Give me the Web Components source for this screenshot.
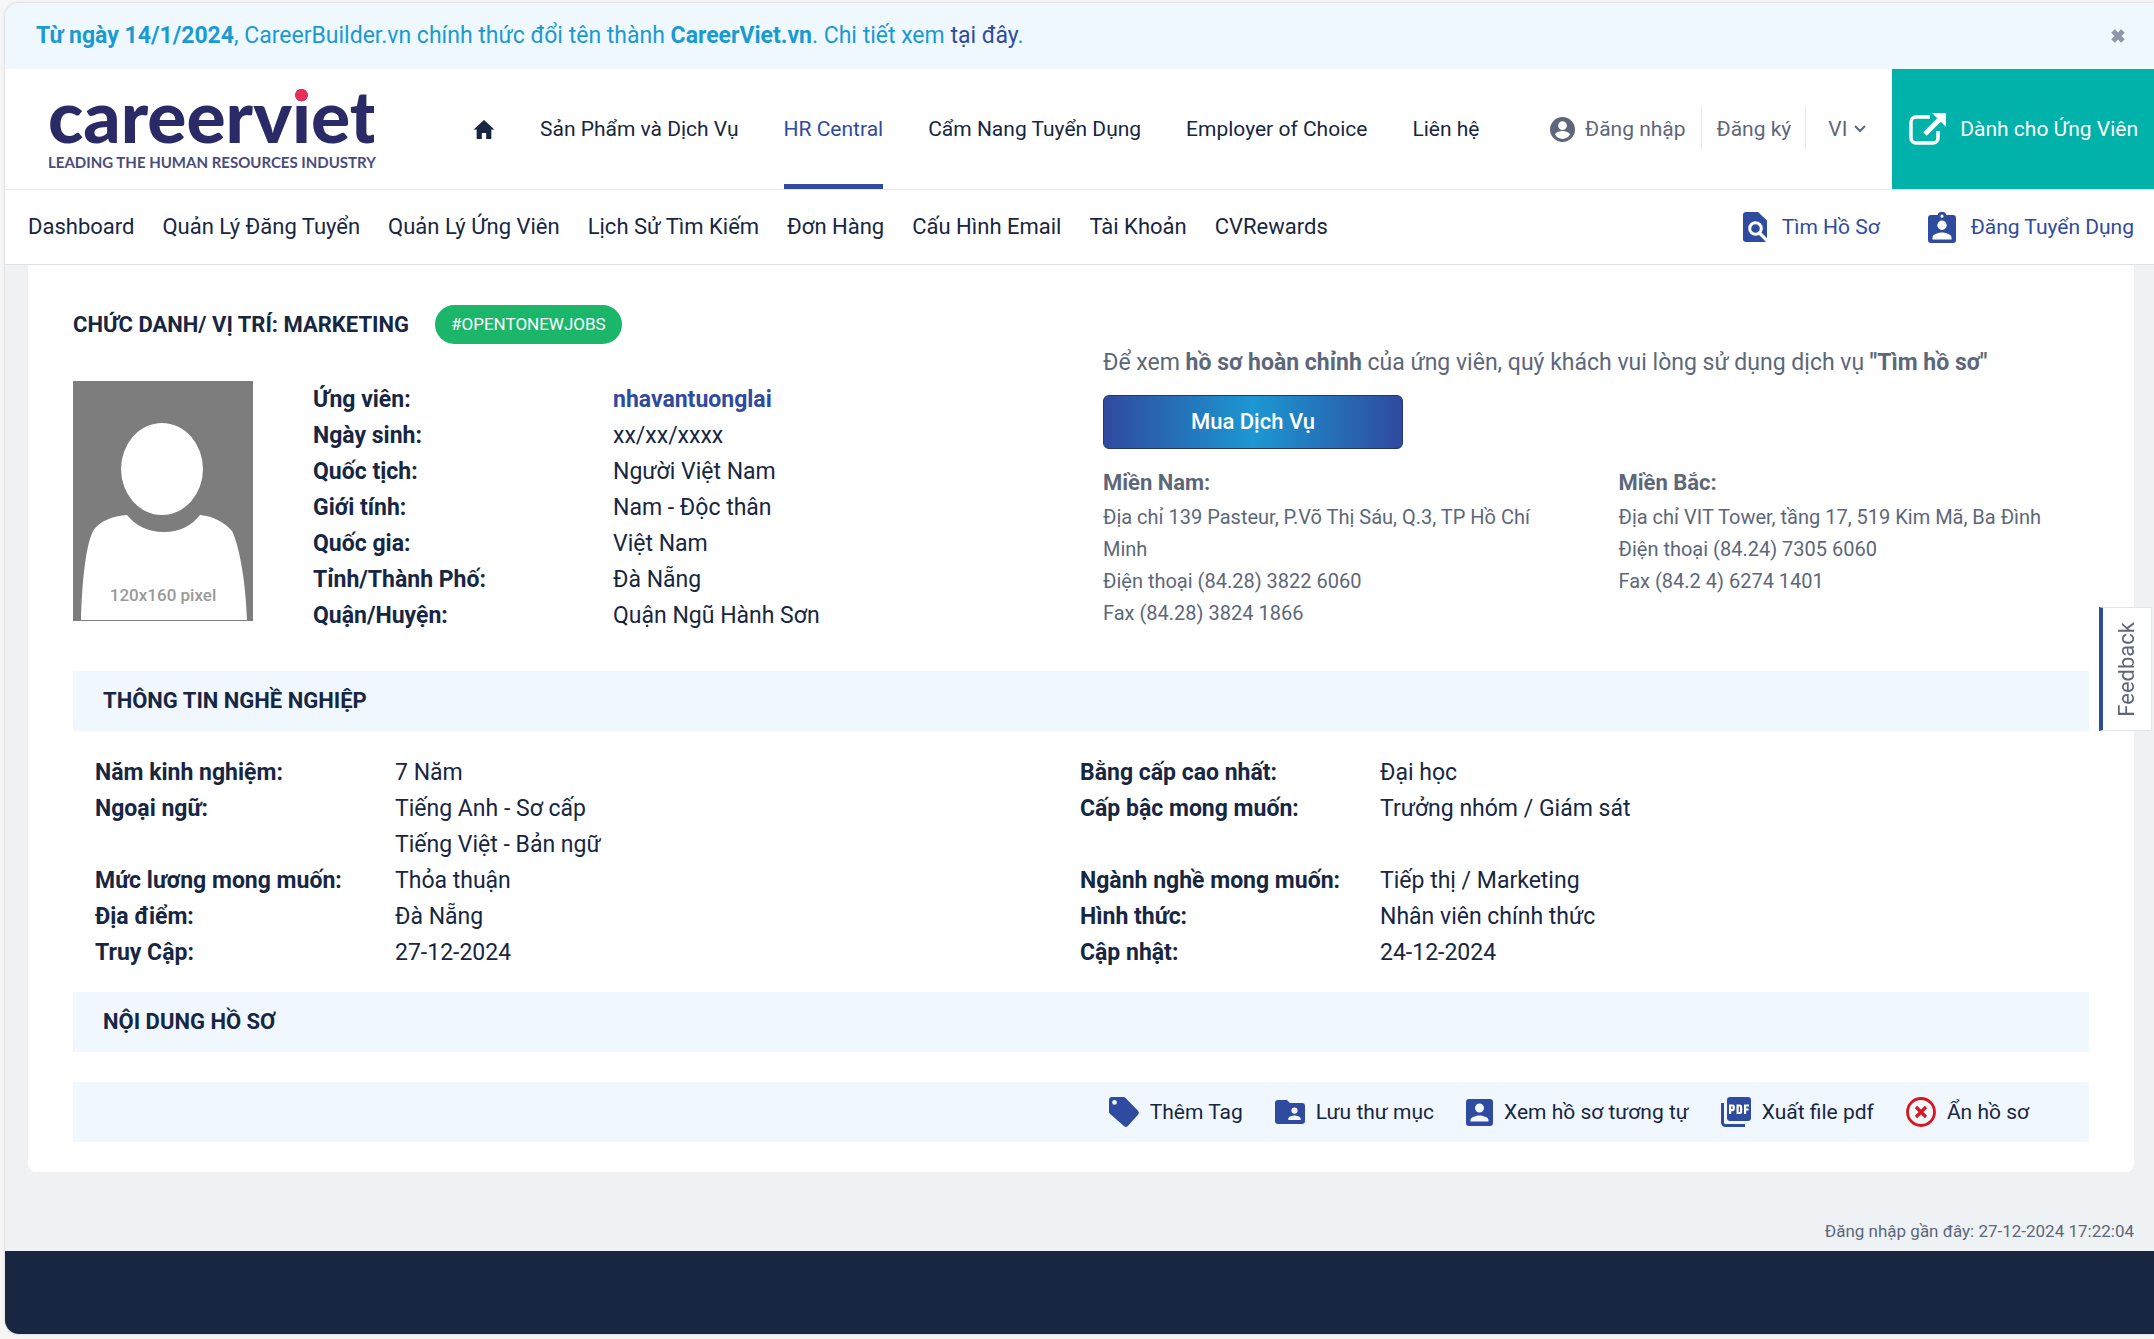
<!DOCTYPE html>
<html lang="vi">
<head>
<meta charset="utf-8">
<title>CareerViet - Hồ sơ ứng viên</title>
<style>
:root{--ink:#172642;--blue:#2f4ba0;--grey:#5d677a;--sky:#1b9ad2;--pale:#f0f7fe}
body{margin:0;padding:3px 0 5px 5px;background:#f6f6f7;font-family:Roboto,"Noto Sans",sans-serif;color:var(--ink);font-size:21px;line-height:30px}
</style>
</head>
<body>
<cv-app></cv-app>
<script>
const ICONS={
home:['0 0 24 22','<path fill="currentColor" d="M12 0 0 11h3.500v11h6v-7h5v7h6V11H24z"/>'],
user:['0 0 24 24','<path fill="currentColor" fill-rule="evenodd" d="M12 0a12 12 0 1 0 0 24 12 12 0 0 0 0-24zm0 4a4.200 4.200 0 1 1 0 8.400A4.200 4.200 0 0 1 12 4zm0 17a8.600 8.600 0 0 1-7.200-3.900c0-2.400 4.800-3.700 7.200-3.700s7.200 1.300 7.200 3.700A8.600 8.600 0 0 1 12 21z"/>'],
chev:['0 0 12 8','<path fill="none" stroke="currentColor" stroke-width="2" d="m1 1 5 5 5-5"/>'],
close:['0 0 14 14','<path fill="none" stroke="currentColor" stroke-width="5" d="m2 2 10 10M12 2 2 12"/>'],
ext:['0 0 37 32','<path fill="none" stroke="currentColor" stroke-width="3.500" d="M21 4H7a5 5 0 0 0-5 5v16a5 5 0 0 0 5 5h17a5 5 0 0 0 5-5v-7"/><path stroke="currentColor" stroke-width="5" d="M16 21 31 6"/><path fill="currentColor" d="M23 0h14v14z"/>'],
search:['0 0 24 30','<path fill="currentColor" d="M3 0h12l9 8.500v21L21 30H3a3 3 0 0 1-3-3V3a3 3 0 0 1 3-3z"/><circle cx="12.500" cy="16.500" r="5.800" fill="none" stroke="#fff" stroke-width="3"/><path stroke="#fff" stroke-width="3.200" d="m16 20.500 8.500 8.500"/>'],
badge:['0 0 28 31','<path fill="currentColor" fill-rule="evenodd" d="M3 3h6.600a4.600 4.600 0 0 1 8.800 0H25a3 3 0 0 1 3 3v22a3 3 0 0 1-3 3H3a3 3 0 0 1-3-3V6a3 3 0 0 1 3-3zm11-.4a1.500 1.500 0 1 0 0 3.100 1.500 1.500 0 0 0 0-3.100zM14 8.500a4.700 4.700 0 1 0 0 9.400 4.700 4.700 0 0 0 0-9.400zM4.500 27.500h19v-2c0-3.200-6.300-5-9.500-5s-9.500 1.800-9.500 5z"/>'],
tag:['0 0 30 30','<path fill="currentColor" fill-rule="evenodd" d="M3 0h11.500q1.200 0 2.100.9L29.200 14q1.600 1.800 0 3.500L18.600 29.200q-1.700 1.600-3.400 0L.9 16.700Q0 15.800 0 14.500V3a3 3 0 0 1 3-3zm2.500 3a2.400 2.400 0 1 0 0 4.800 2.400 2.400 0 0 0 0-4.800z"/>'],
folder:['0 0 30 24','<path fill="currentColor" fill-rule="evenodd" d="M3 0h9l3 3h12a3 3 0 0 1 3 3v15a3 3 0 0 1-3 3H3a3 3 0 0 1-3-3V3a3 3 0 0 1 3-3zm16.500 7.500a3 3 0 1 0 0 6.200 3 3 0 0 0 0-6.200zM13.300 20h12.400v-1.300c0-2.100-4.100-3.200-6.200-3.200s-6.200 1.100-6.200 3.200z"/>'],
person:['0 0 27 27','<path fill="currentColor" fill-rule="evenodd" d="M3 0h21a3 3 0 0 1 3 3v21a3 3 0 0 1-3 3H3a3 3 0 0 1-3-3V3a3 3 0 0 1 3-3zm10.500 4.500a4.500 4.500 0 1 0 0 9 4.500 4.500 0 0 0 0-9zM4.500 22.500h18V21c0-3-6-4.600-9-4.600S4.500 18 4.500 21z"/>'],
pdf:['0 0 30 30','<path fill="currentColor" d="M9 0h18a3 3 0 0 1 3 3v18a3 3 0 0 1-3 3H9a3 3 0 0 1-3-3V3a3 3 0 0 1 3-3z"/><path fill="none" stroke="currentColor" stroke-width="3" d="M1.500 6v19.500a3 3 0 0 0 3 3H24"/><path fill="none" stroke="#fff" stroke-width="2.200" d="M9.100 17V8.500h2.600a1 1 0 0 1 1 1v2.600a1 1 0 0 1-1 1H9.100M16.600 8.500h2a1.500 1.500 0 0 1 1.500 1.500v4.500a1.500 1.500 0 0 1-1.500 1.500h-2zM24.100 17V8.500H28M24.100 12.500h3.400"/>'],
hide:['0 0 30 30','<circle cx="15" cy="15" r="13.500" fill="none" stroke="#d8161e" stroke-width="2.800"/><path stroke="#d8161e" stroke-width="3.200" d="m10 10 10 10M20 10 10 20"/>']
};
const def=(name,css,html)=>customElements.define(name,class extends HTMLElement{
  constructor(){super();this.attachShadow({mode:'open'});}
  connectedCallback(){
    this.shadowRoot.innerHTML='<style>*{box-sizing:border-box}:host{display:block}a{color:inherit;text-decoration:none}'+css+'</style>'+(typeof html==='function'?html(this):html);
  }
});
def('cv-icon',':host{display:inline-flex;flex:none}svg{display:block;overflow:visible}',e=>{
  const [vb,body]=ICONS[e.getAttribute('name')];
  return `<svg width="${e.getAttribute('w')}" height="${e.getAttribute('h')}" viewBox="${vb}" aria-hidden="true">${body}</svg>`;
});
def('cv-banner',`
:host{display:flex;align-items:center;justify-content:space-between;height:66px;padding:0 23px 0 31px;background:#eff8ff;color:var(--sky);font-size:23px}
p{margin:0}
button{border:0;background:none;padding:6px;color:#8f96a8;display:flex}`,
`<p><slot></slot></p><button aria-label="Đóng"><cv-icon name="close" w="14" h="14"></cv-icon></button>`);
/* The red area lies only behind the dot of the "i"; the rest of the word is navy. */
def('cv-logo',`
a{display:block;width:326px;padding-bottom:8px;font-family:Lato,sans-serif}
b{display:block;font-size:73px;line-height:72px;font-weight:900;color:transparent;background:linear-gradient(#ea2e5b,#ea2e5b) 238px 0/26px 24px no-repeat,linear-gradient(#292a66,#292a66);-webkit-background-clip:text;background-clip:text}
small{display:block;margin-top:2px;font-size:15px;line-height:18px;font-weight:700;color:#4a4b7c;white-space:nowrap}`,
`<a href="#"><b>careerviet</b><small>LEADING THE HUMAN RESOURCES INDUSTRY</small></a>`);
def('cv-header',`
:host{display:flex;height:121px;background:#fff;border-bottom:1px solid #e6e8ea;padding-left:43px}
cv-logo{align-self:center}
nav{display:flex;gap:45px;margin-left:99px}
nav a{display:flex;align-items:center;height:120px;white-space:nowrap;border:solid transparent;border-width:5px 0}
nav a.on{color:var(--blue);border-bottom-color:var(--blue)}
.user{display:flex;align-items:center;margin-left:auto;color:var(--grey)}
.user>*{display:flex;align-items:center;height:42px;white-space:nowrap}
.user .in{gap:10px;padding-right:15px}
.user .up{padding:0 14px 0 15px;border:solid #e4e7ec;border-width:0 1px}
.lang{padding:0 26px 0 22px;gap:6px}
select{appearance:none;border:0;background:none;font:inherit;color:inherit;padding:0;margin:0}
.seek{display:flex;align-items:center;gap:14px;background:#00b2a9;color:#fff;padding:0 16px 0 17px;white-space:nowrap}`,
`<cv-logo></cv-logo>
<nav><a href="#" aria-label="Trang chủ"><cv-icon name="home" w="22" h="19"></cv-icon></a><a href="#">Sản Phẩm và Dịch Vụ</a><a href="#" class="on">HR Central</a><a href="#">Cẩm Nang Tuyển Dụng</a><a href="#">Employer of Choice</a><a href="#">Liên hệ</a></nav>
<div class="user"><a class="in" href="#"><cv-icon name="user" w="25" h="25"></cv-icon>Đăng nhập</a><a class="up" href="#">Đăng ký</a><label class="lang"><select aria-label="Ngôn ngữ"><option>VI</option></select><cv-icon name="chev" w="12" h="8"></cv-icon></label></div>
<a class="seek" href="#"><cv-icon name="ext" w="37" h="32"></cv-icon>Dành cho Ứng Viên</a>`);
def('cv-subnav',`
:host{display:flex;align-items:center;justify-content:space-between;height:75px;background:#fff;border-bottom:1px solid #dfe2e5;padding:0 20px 0 23px}
nav{display:flex;gap:28px;white-space:nowrap;font-size:22px}
nav.r{gap:48px;color:var(--blue);font-size:21px}nav.r a{display:flex;align-items:center;gap:15px}`,
`<nav><a href="#">Dashboard</a><a href="#">Quản Lý Đăng Tuyển</a><a href="#">Quản Lý Ứng Viên</a><a href="#">Lịch Sử Tìm Kiếm</a><a href="#">Đơn Hàng</a><a href="#">Cấu Hình Email</a><a href="#">Tài Khoản</a><a href="#">CVRewards</a></nav>
<nav class="r"><a href="#"><cv-icon name="search" w="24" h="30"></cv-icon>Tìm Hồ Sơ</a><a href="#"><cv-icon name="badge" w="28" h="31"></cv-icon>Đăng Tuyển Dụng</a></nav>`);
def('cv-field',`
:host{display:grid;grid-template-columns:300px 1fr;font-size:23px;line-height:36px}
b{font-weight:700}`,
e=>`<b>${e.getAttribute('label')}</b><span><slot></slot></span>`);
def('cv-bar',`
:host{display:flex;align-items:center;height:60px;background:var(--pale);padding:0 30px}
h2{margin:0;font-size:22px;line-height:30px;font-weight:700}`,`<h2><slot></slot></h2>`);
def('cv-avatar',`svg{display:block}text{font:500 17px Roboto,sans-serif;fill:#999}`,
`<svg width="180" height="240" viewBox="0 0 180 240" role="img" aria-label="Ảnh ứng viên"><rect width="180" height="240" fill="#7d7d7d"/><ellipse cx="89" cy="88" rx="41" ry="46" fill="#fff"/><path fill="#fff" d="M8 239C9 205 12 167 20 150c6-10 20-15 34-16 8 10 20 17 37 17s28-7 36-17c14 1 25 8 32 16 8 16 14 55 15 89z"/><text x="90" y="220" text-anchor="middle">120x160 pixel</text></svg>`);
def('cv-office',`
:host{font-size:20px;line-height:32px;color:var(--grey)}b{display:block;font-size:22px;line-height:36px}`,
e=>`<b>${e.getAttribute('name')}</b><slot></slot>`);
def('cv-offer',`
:host{color:var(--grey);padding-top:43px}
p{margin:0 0 14px;font-size:23px;line-height:36px}
button{display:block;width:300px;height:54px;border:1px solid #24386f;border-radius:6px;background:linear-gradient(90deg,#2f4a9f,#1c98d2 50%,#2f4a9f);color:#fff;font:500 22px/30px Roboto,sans-serif;padding:0}
div{display:grid;grid-template-columns:1fr 1fr;gap:45px;margin-top:16px}`,
`<p>Để xem <b>hồ sơ hoàn chỉnh</b> của ứng viên, quý khách vui lòng sử dụng dịch vụ <b>"Tìm hồ sơ"</b></p>
<button>Mua Dịch Vụ</button>
<div><cv-office name="Miền Nam:">Địa chỉ 139 Pasteur, P.Võ Thị Sáu, Q.3, TP Hồ Chí Minh<br>Điện thoại (84.28) 3822 6060<br>Fax (84.28) 3824 1866</cv-office>
<cv-office name="Miền Bắc:">Địa chỉ VIT Tower, tầng 17, 519 Kim Mã, Ba Đình<br>Điện thoại (84.24) 7305 6060<br>Fax (84.2 4) 6274 1401</cv-office></div>`);
def('cv-profile',`
:host{display:grid;grid-template-columns:1fr 986px;padding-top:37px;padding-bottom:37px}
header{display:flex;align-items:center;gap:26px;height:45px}
h1{margin:0;font-size:22px;line-height:30px;font-weight:700}
.pill{height:39px;line-height:39px;border-radius:20px;background:#1cb66b;color:#fff;font-size:17px;padding:0 16px}
.who{display:grid;grid-template-columns:180px 1fr;gap:60px;margin-top:34px;align-items:start}
.rows{padding-top:1px}
a{color:var(--blue);font-weight:700}`,
`<div><header><h1>CHỨC DANH/ VỊ TRÍ: MARKETING</h1><span class="pill">#OPENTONEWJOBS</span></header>
<div class="who"><cv-avatar></cv-avatar><div class="rows">
<cv-field label="Ứng viên:"><a href="#">nhavantuonglai</a></cv-field>
<cv-field label="Ngày sinh:">xx/xx/xxxx</cv-field>
<cv-field label="Quốc tịch:">Người Việt Nam</cv-field>
<cv-field label="Giới tính:">Nam - Độc thân</cv-field>
<cv-field label="Quốc gia:">Việt Nam</cv-field>
<cv-field label="Tỉnh/Thành Phố:">Đà Nẵng</cv-field>
<cv-field label="Quận/Huyện:">Quận Ngũ Hành Sơn</cv-field></div></div></div>
<cv-offer></cv-offer>`);
def('cv-career',`
:host{display:grid;grid-template-columns:1fr 1fr;padding:24px 24px 21px 22px}`,
`<cv-field label="Năm kinh nghiệm:">7 Năm</cv-field><cv-field label="Bằng cấp cao nhất:">Đại học</cv-field>
<cv-field label="Ngoại ngữ:">Tiếng Anh - Sơ cấp<br>Tiếng Việt - Bản ngữ</cv-field><cv-field label="Cấp bậc mong muốn:">Trưởng nhóm / Giám sát</cv-field>
<cv-field label="Mức lương mong muốn:">Thỏa thuận</cv-field><cv-field label="Ngành nghề mong muốn:">Tiếp thị / Marketing</cv-field>
<cv-field label="Địa điểm:">Đà Nẵng</cv-field><cv-field label="Hình thức:">Nhân viên chính thức</cv-field>
<cv-field label="Truy Cập:">27-12-2024</cv-field><cv-field label="Cập nhật:">24-12-2024</cv-field>`);
def('cv-actions',`
:host{display:flex;align-items:center;justify-content:flex-end;gap:32px;height:60px;margin-top:30px;padding-right:60px;background:var(--pale)}
a{display:flex;align-items:center;gap:11px;white-space:nowrap}cv-icon{color:var(--blue)}`,
`<a href="#"><cv-icon name="tag" w="30" h="30"></cv-icon>Thêm Tag</a><a href="#"><cv-icon name="folder" w="30" h="24"></cv-icon>Lưu thư mục</a><a href="#"><cv-icon name="person" w="27" h="27"></cv-icon>Xem hồ sơ tương tự</a><a href="#"><cv-icon name="pdf" w="30" h="30"></cv-icon>Xuất file pdf</a><a href="#"><cv-icon name="hide" w="30" h="30"></cv-icon>Ẩn hồ sơ</a>`);
def('cv-feedback',`
:host{position:absolute;right:2px;top:604px}
button{height:124px;width:53px;display:flex;align-items:center;justify-content:center;background:#fff;border:1px solid #e3e5e9;border-left:4px solid #2f4b94;padding:0;color:var(--grey);font:22px/24px Roboto,sans-serif}
span{writing-mode:vertical-rl;transform:rotate(180deg)}`,`<button><span>Feedback</span></button>`);
def('cv-app',`
:host{position:relative;border-radius:14px 0 0 14px;overflow:hidden;background:#eff2f5;box-shadow:0 0 3px #c5c8cc}
main{margin:0 20px 0 23px;padding:0 45px 30px;background:#fff;border-radius:0 0 8px 8px}
.last{margin:44px 20px 5px 0;text-align:right;color:var(--grey);font-size:17px;line-height:30px}
footer{height:83px;background:#182641}`,
`<cv-banner><b>Từ ngày 14/1/2024</b>, CareerBuilder.vn chính thức đổi tên thành <b>CareerViet.vn</b>. Chi tiết xem <a href="#" style="color:var(--blue);text-decoration:none">tại đây</a>.</cv-banner>
<cv-header></cv-header><cv-subnav></cv-subnav>
<main><cv-profile></cv-profile><cv-bar>THÔNG TIN NGHỀ NGHIỆP</cv-bar><cv-career></cv-career><cv-bar>NỘI DUNG HỒ SƠ</cv-bar><cv-actions></cv-actions></main>
<p class="last">Đăng nhập gần đây: 27-12-2024 17:22:04</p><footer></footer><cv-feedback></cv-feedback>`);
</script>
</body>
</html>
